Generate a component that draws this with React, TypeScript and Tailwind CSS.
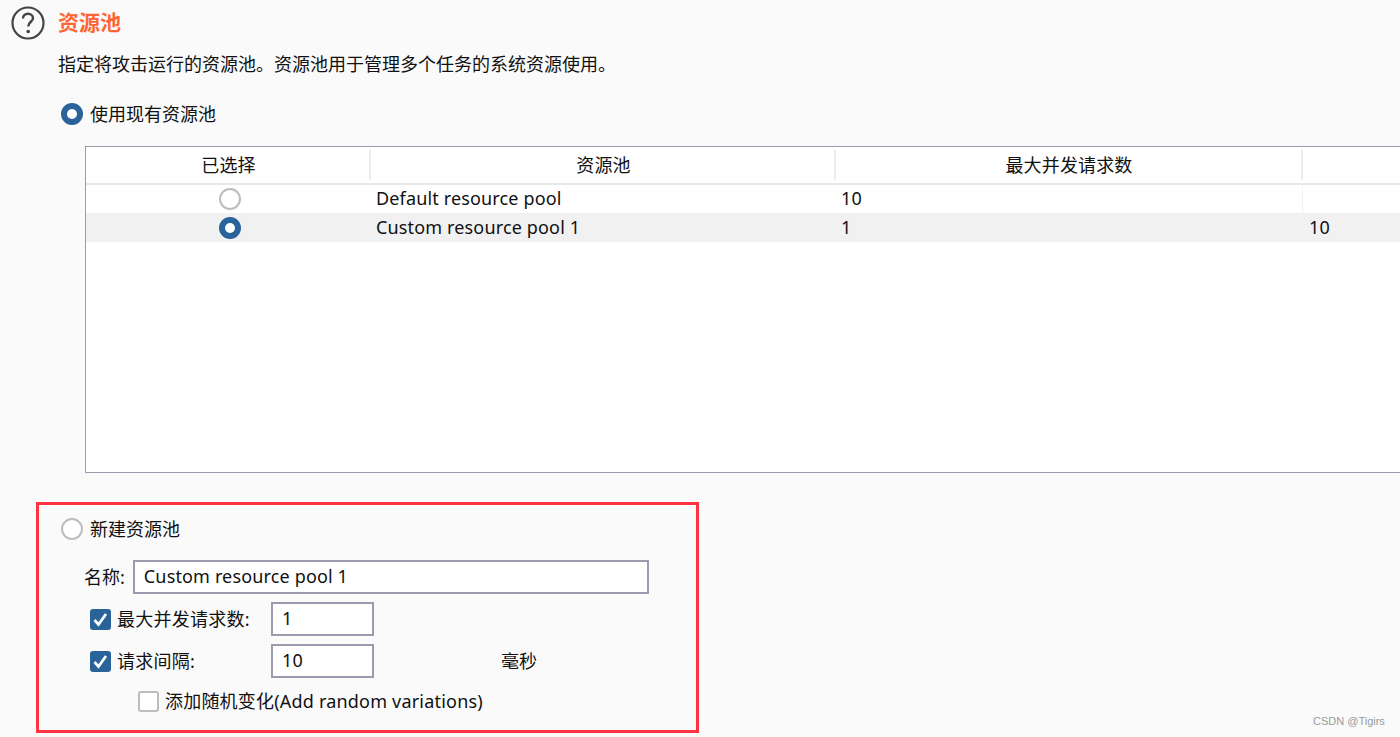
import React from "react";

const font = "font-['Noto_Sans','Noto_Sans_CJK_SC',sans-serif]";

function Radio({ on = false }: { on?: boolean }): React.ReactElement {
  if (on) {
    return (
      <span className="flex h-[22px] w-[22px] shrink-0 items-center justify-center rounded-full bg-[#2a6399]">
        <span className="h-[10px] w-[10px] rounded-full bg-white" />
      </span>
    );
  }
  return <span className="block h-[22px] w-[22px] shrink-0 rounded-full border-2 border-[#bdbdbd] bg-white" />;
}

function Check({ on = false }: { on?: boolean }): React.ReactElement {
  if (on) {
    return (
      <span className="flex h-[21px] w-[21px] shrink-0 items-center justify-center rounded-[3px] bg-[#2a6399]">
        <svg width="21" height="21" viewBox="0 0 21 21" fill="none">
          <path d="M4.5 11 L8.5 15.5 L16 5" stroke="white" strokeWidth="2.7" />
        </svg>
      </span>
    );
  }
  return <span className="block h-[21px] w-[21px] shrink-0 rounded-[3px] border-2 border-[#bdbdbd] bg-white" />;
}

function Field({ value, className }: { value: string; className: string }): React.ReactElement {
  return (
    <div className={`flex items-center border-2 border-[#9c9bae] bg-white pb-[2px] pl-[9px] tracking-[0.15px] ${className}`}>
      {value}
    </div>
  );
}

function HelpIcon(): React.ReactElement {
  return (
    <svg width="34" height="34" viewBox="0 0 34 34" fill="none" className="shrink-0">
      <circle cx="17" cy="17" r="15.5" stroke="#444" strokeWidth="2.2" />
      <path d="M12 12.5 C12 9.5 14.3 7.8 17 7.8 C20 7.8 22 9.8 22 12.2 C22 15.8 17.2 15.8 17.2 20.5" stroke="#444" strokeWidth="2.4" />
      <circle cx="17.2" cy="25.5" r="1.8" fill="#444" />
    </svg>
  );
}

const columns = "grid grid-cols-[285px_465px_467px_1fr]";

export default function App(): React.ReactElement {
  return (
    <div className={`relative h-[737px] w-[1400px] overflow-hidden bg-[#fafafa] text-[18px] leading-[24px] text-[#111] ${font}`}>
      <div className="flex items-center pl-[11px] pt-[6px]">
        <HelpIcon />
        <h1 className="ml-[13px] -mt-[3px] text-[21px] font-bold text-[#ff6633]">资源池</h1>
      </div>
      <p className="ml-[58px] mt-[12px]">指定将攻击运行的资源池。资源池用于管理多个任务的系统资源使用。</p>

      <div className="ml-[61px] mt-[26px] flex items-center gap-[7px]">
        <Radio on />
        <span>使用现有资源池</span>
      </div>

      <div className="ml-[85px] mt-[20px] h-[327px] w-[1340px] border border-[#9c9bae] bg-white">
        <div className={`${columns} h-[38px] border-b-2 border-[#e8e8e8] text-center tracking-[0.15px]`}>
          <div className="my-[3px] flex items-center justify-center border-r-2 border-[#ececec] pl-[2px]">已选择</div>
          <div className="my-[3px] flex items-center justify-center border-r-2 border-[#ececec] pl-[2px]">资源池</div>
          <div className="my-[3px] flex items-center justify-center border-r-2 border-[#ececec] pl-[1px]">最大并发请求数</div>
          <div />
        </div>
        <div className={`${columns} h-[28px] items-center tracking-[0.15px]`}>
          <div className="flex justify-center pl-[2px]"><Radio /></div>
          <div className="pb-[2px] pl-[5px]">Default resource pool</div>
          <div className="pb-[2px] pl-[5px]">10</div>
          <div className="-ml-px h-full border-l border-[#f2f2f2]" />
        </div>
        <div className={`${columns} h-[29px] items-center bg-[#f1f1f1] tracking-[0.15px]`}>
          <div className="flex justify-center pl-[2px]"><Radio on /></div>
          <div className="pb-[2px] pl-[5px]">Custom resource pool 1</div>
          <div className="pb-[2px] pl-[5px]">1</div>
          <div className="pb-[2px] pl-[6px]">10</div>
        </div>
      </div>

      <section className="ml-[36px] mt-[29px] h-[231px] w-[663px] border-[3px] border-[#ff3344] pl-[22px] pt-[12px]">
        <div className="flex items-center gap-[7px]">
          <Radio />
          <span>新建资源池</span>
        </div>
        <div className="ml-[23px] mt-[19px] flex items-center gap-[8px]">
          <span>名称:</span>
          <Field value="Custom resource pool 1" className="h-[34px] w-[516px]" />
        </div>
        <div className="ml-[29px] mt-[8px] flex items-center">
          <Check on />
          <span className="ml-[6px] w-[154px] tracking-[0.25px]">最大并发请求数:</span>
          <Field value="1" className="h-[34px] w-[103px]" />
        </div>
        <div className="ml-[29px] mt-[8px] flex items-center">
          <Check on />
          <span className="ml-[6px] w-[154px] tracking-[0.25px]">请求间隔:</span>
          <Field value="10" className="h-[34px] w-[103px]" />
          <span className="ml-[127px]">毫秒</span>
        </div>
        <div className="ml-[77px] mt-[11px] flex items-center gap-[6px]">
          <Check />
          <span className="tracking-[0.2px]">添加随机变化(Add random variations)</span>
        </div>
      </section>

      <span className="absolute left-[1313px] top-[714px] font-['Liberation_Sans',sans-serif] text-[11px] leading-[14px] text-[#999]">CSDN @Tigirs</span>
    </div>
  );
}
